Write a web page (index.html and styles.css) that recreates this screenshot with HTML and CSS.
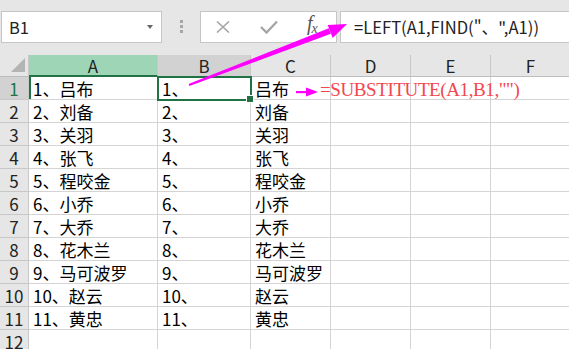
FILE: index.html
```html
<!DOCTYPE html>
<html lang="zh-CN">
<head>
    <meta charset="UTF-8">
    <title>Excel - LEFT / SUBSTITUTE</title>
    <link rel="stylesheet" href="styles.css">
</head>
<body>
    <div class="topbar">
        <div class="namebox">
            <span>B1</span>
            <i class="caret"></i>
        </div>
        <div class="grip"><i></i><i></i><i></i></div>
        <div class="fxbox">
            <svg class="btn-x" width="14" height="12" viewBox="0 0 14 12"><path d="M1 0.5 L13 11.5 M13 0.5 L1 11.5" stroke="#a6a6a6" stroke-width="1.6" fill="none"/></svg>
            <svg class="btn-ok" width="18" height="14" viewBox="0 0 18 14"><path d="M1 7 L6.5 12.5 L17 1.5" stroke="#a6a6a6" stroke-width="2.4" fill="none"/></svg>
            <span class="fx">f<sub>x</sub></span>
        </div>
        <div class="formula">=LEFT(A1,FIND("、",A1))</div>
    </div>

    <div class="sheet">
        <div class="corner"><i></i></div>
        <div class="colhead sel">A</div>
        <div class="colhead cur">B</div>
        <div class="colhead">C</div>
        <div class="colhead">D</div>
        <div class="colhead">E</div>
        <div class="colhead">F</div>

        <div class="rowhead cur">1</div>
        <div class="cell first">1、吕布</div>
        <div class="cell active">1、<b class="handle"></b></div>
        <div class="cell">吕布</div>
        <div class="cell"></div><div class="cell"></div><div class="cell"></div>

        <div class="rowhead">2</div>
        <div class="cell">2、刘备</div><div class="cell">2、</div><div class="cell">刘备</div>
        <div class="cell"></div><div class="cell"></div><div class="cell"></div>

        <div class="rowhead">3</div>
        <div class="cell">3、关羽</div><div class="cell">3、</div><div class="cell">关羽</div>
        <div class="cell"></div><div class="cell"></div><div class="cell"></div>

        <div class="rowhead">4</div>
        <div class="cell">4、张飞</div><div class="cell">4、</div><div class="cell">张飞</div>
        <div class="cell"></div><div class="cell"></div><div class="cell"></div>

        <div class="rowhead">5</div>
        <div class="cell">5、程咬金</div><div class="cell">5、</div><div class="cell">程咬金</div>
        <div class="cell"></div><div class="cell"></div><div class="cell"></div>

        <div class="rowhead">6</div>
        <div class="cell">6、小乔</div><div class="cell">6、</div><div class="cell">小乔</div>
        <div class="cell"></div><div class="cell"></div><div class="cell"></div>

        <div class="rowhead">7</div>
        <div class="cell">7、大乔</div><div class="cell">7、</div><div class="cell">大乔</div>
        <div class="cell"></div><div class="cell"></div><div class="cell"></div>

        <div class="rowhead">8</div>
        <div class="cell">8、花木兰</div><div class="cell">8、</div><div class="cell">花木兰</div>
        <div class="cell"></div><div class="cell"></div><div class="cell"></div>

        <div class="rowhead">9</div>
        <div class="cell">9、马可波罗</div><div class="cell">9、</div><div class="cell">马可波罗</div>
        <div class="cell"></div><div class="cell"></div><div class="cell"></div>

        <div class="rowhead">10</div>
        <div class="cell">10、赵云</div><div class="cell">10、</div><div class="cell">赵云</div>
        <div class="cell"></div><div class="cell"></div><div class="cell"></div>

        <div class="rowhead">11</div>
        <div class="cell">11、黄忠</div><div class="cell">11、</div><div class="cell">黄忠</div>
        <div class="cell"></div><div class="cell"></div><div class="cell"></div>

        <div class="rowhead">12</div>
        <div class="cell"></div><div class="cell"></div><div class="cell"></div>
        <div class="cell"></div><div class="cell"></div><div class="cell"></div>
    </div>

    <!-- 批注：公式说明 -->
    <div class="note">=SUBSTITUTE(A1,B1,"")</div>

    <svg class="arrows" width="569" height="349" viewBox="0 0 569 349">
        <polygon points="188.6,84.1 189.4,86.0 330.9,33.8 328.8,28.2" fill="#f0f"/>
        <polygon points="347,24 327.7,25 332.7,38" fill="#f0f"/>
        <rect x="296" y="91" width="12" height="2.2" fill="#f0f"/>
        <polygon points="318,92 306,87.5 306,96.5" fill="#f0f"/>
    </svg>
</body>
</html>
```

FILE: styles.css
```css
body {
    margin: 0;
    width: 569px;
    height: 349px;
    overflow: hidden;
    position: relative;
    background: #e6e6e6;
    font-family: "Noto Sans CJK SC", "Noto Sans", sans-serif;
    color: #000;
}

/* Barra de fórmulas */
.topbar {
    display: flex;
    align-items: center;
    height: 55px;
    padding: 0 0 2px 1px;
    box-sizing: border-box;
}

.namebox {
    width: 161px;
    height: 32px;
    box-sizing: border-box;
    background: #fff;
    border: 1px solid #c6c6c6;
    display: flex;
    align-items: center;
    padding: 0 8px 0 7px;
    font-size: 16.5px;
    color: #222;
}

.namebox span {
    flex: 1;
}

.caret {
    width: 0;
    height: 0;
    border-left: 3px solid transparent;
    border-right: 3px solid transparent;
    border-top: 4px solid #666;
}

.grip {
    width: 38px;
    display: flex;
    flex-direction: column;
    align-items: center;
    gap: 2px;
}

.grip i {
    width: 3px;
    height: 3px;
    background: #a6a6a6;
}

.fxbox {
    width: 137px;
    height: 32px;
    box-sizing: border-box;
    background: #fff;
    border: 1px solid #c6c6c6;
    display: flex;
    align-items: center;
    padding-left: 15px;
}

.btn-x {
    margin-right: 30px;
}

.btn-ok {
    margin-right: 29px;
}

.fx {
    font-family: "Liberation Serif", serif;
    font-style: italic;
    font-size: 20px;
    color: #555;
    line-height: 1;
    margin-top: -4px;
}

.fx sub {
    font-size: 14px;
    vertical-align: -3px;
    margin-left: -1px;
}

.formula {
    flex: 1;
    margin-left: 3px;
    height: 32px;
    box-sizing: border-box;
    background: #fff;
    border: 1px solid #c6c6c6;
    border-right: none;
    display: flex;
    align-items: center;
    padding-left: 13px;
    font-size: 16.6px;
    color: #222;
}

/* Planilha */
.sheet {
    display: grid;
    grid-template-columns: 29px 129px 93px 80px 80px 80px 80px;
    grid-template-rows: 22px;
    grid-auto-rows: 23px;
    background: #fff;
}

.corner,
.colhead,
.rowhead {
    background: #e6e6e6;
    box-sizing: border-box;
    border-right: 1px solid #c8c8c8;
    border-bottom: 1px solid #bdbdbd;
    display: flex;
    align-items: center;
    justify-content: center;
    font-size: 17px;
    color: #222;
}

.rowhead {
    border-bottom-color: #c8c8c8;
}

.corner {
    position: relative;
}

.corner i {
    position: absolute;
    right: 3px;
    bottom: 4px;
    width: 0;
    height: 0;
    border-left: 14px solid transparent;
    border-bottom: 14px solid #b4b4b4;
}

.colhead.sel {
    background: #9fd5b7;
    border-bottom: 2px solid #217346;
}

.colhead.cur {
    background: #d2d2d2;
}

.rowhead.cur {
    background: #d2d2d2;
    color: #217346;
}

.cell {
    box-sizing: border-box;
    border-right: 1px solid #d4d4d4;
    border-bottom: 1px solid #d4d4d4;
    display: flex;
    align-items: center;
    padding-left: 4px;
    font-size: 17px;
    white-space: nowrap;
    overflow: hidden;
}

.cell.first {
    box-shadow: inset 2px 0 #217346;
}

.cell.active {
    position: relative;
    overflow: visible;
    outline: 2px solid #217346;
    outline-offset: -1px;
    z-index: 2;
}

.handle {
    position: absolute;
    right: -4px;
    bottom: -4px;
    width: 6px;
    height: 6px;
    background: #217346;
    border: 1px solid #fff;
}

/* Anotações */
.note {
    position: absolute;
    left: 320px;
    top: 79px;
    font-family: "Liberation Serif", serif;
    font-size: 19px;
    letter-spacing: -0.4px;
    color: #f2474d;
}

.arrows {
    position: absolute;
    top: 0;
    left: 0;
    pointer-events: none;
    z-index: 5;
}
```
